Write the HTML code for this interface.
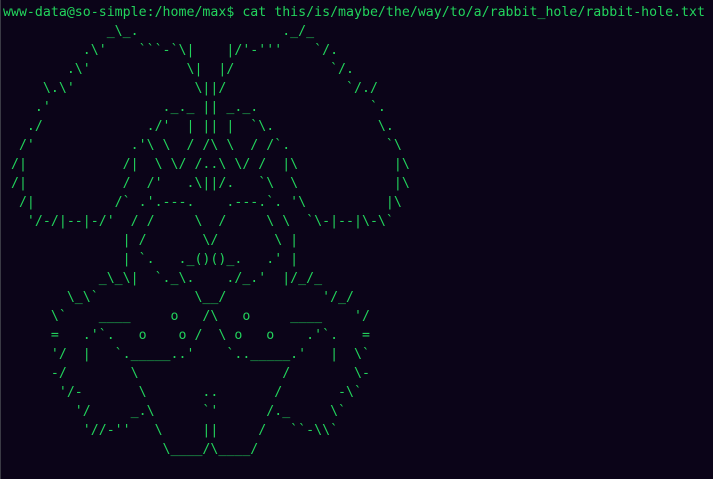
<!DOCTYPE html>
<html><head><meta charset="utf-8"><style>
html,body{margin:0;padding:0;background:#0b0418;width:713px;height:479px;overflow:hidden}
body{border-left:1px solid #3a3a44;box-sizing:border-box}
pre{margin:0;padding:3px 0 0 2px;font-family:"DejaVu Sans Mono","Liberation Mono",monospace;font-size:13.25px;line-height:19px;color:#22d35c;white-space:pre}
</style></head><body><pre>www-data@so-simple:/home/max$ cat this/is/maybe/the/way/to/a/rabbit_hole/rabbit-hole.txt
             _\_.                  ._/_
          .\'    &#96;&#96;&#96;-&#96;\|    |/'-'''    &#96;/.
        .\'            \|  |/            &#96;/.
     \.\'               \||/               &#96;/./
    .'              ._._ || _._.              &#96;.
   ./             ./'  | || |  &#96;\.             \.
  /'            .'\ \  / /\ \  / /&#96;.            &#96;\
 /|            /|  \ \/ /..\ \/ /  |\            |\
 /|            /  /'   .\||/.   &#96;\  \            |\
  /|          /&#96; .'.---.    .---.&#96;. '\          |\
   '/-/|--|-/'  / /     \  /     \ \  &#96;\-|--|\-\&#96;
               | /       \/       \ |
               | &#96;.   ._()()_.   .' |
            _\_\|  &#96;._\.    ./_.'  |/_/_
        \_\&#96;            \__/            '/_/
      \&#96;    ____     o   /\   o     ____    '/
      =   .'&#96;.   o    o /  \ o   o    .'&#96;.   =
      '/  |   &#96;._____..'    &#96;.._____.'   |  \&#96;
      -/        \                  /        \-
       '/-       \       ..       /       -\&#96;
         '/     _.\      &#96;'      /._     \&#96;
          '//-''   \     ||     /   &#96;&#96;-\\&#96;
                    \____/\____/</pre></body></html>
